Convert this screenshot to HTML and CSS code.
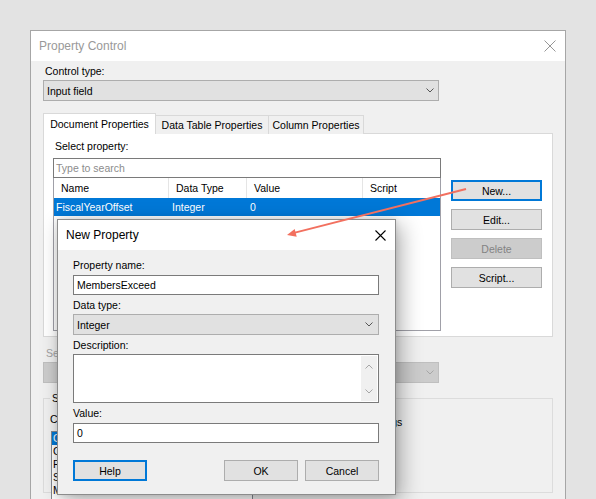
FILE: index.html
```html
<!DOCTYPE html>
<html lang="en">
<head>
    <meta charset="UTF-8">
    <title>Property Control</title>
    <link rel="stylesheet" href="styles.css">
</head>
<body>
    <div class="window">
        <div class="titlebar">
            <span class="title">Property Control</span>
            <svg class="close-x dim" width="12" height="12" viewBox="0 0 12 12"><path d="M0.5 0.5 L11.5 11.5 M11.5 0.5 L0.5 11.5" /></svg>
        </div>
        <div class="content">
            <div class="label first">Control type:</div>
            <div class="combo">
                <span>Input field</span>
                <svg class="chev" width="8" height="5" viewBox="0 0 8 5"><polyline points="0.5,0.5 4,4 7.5,0.5" /></svg>
            </div>

            <div class="tabs">
                <div class="tab active" style="width:113px">Document Properties</div>
                <div class="tab" style="width:113px">Data Table Properties</div>
                <div class="tab" style="width:95px">Column Properties</div>
            </div>
            <div class="tab-panel">
                <div class="prop-left">
                    <div class="label">Select property:</div>
                    <div class="search">Type to search</div>
                    <div class="list">
                        <div class="list-head">
                            <div>Name</div>
                            <div>Data Type</div>
                            <div>Value</div>
                            <div>Script</div>
                        </div>
                        <div class="list-row selected">
                            <div>FiscalYearOffset</div>
                            <div>Integer</div>
                            <div>0</div>
                            <div></div>
                        </div>
                    </div>
                </div>
                <div class="prop-buttons">
                    <div class="btn default">New...</div>
                    <div class="btn">Edit...</div>
                    <div class="btn disabled">Delete</div>
                    <div class="btn">Script...</div>
                </div>
            </div>

            <div class="label dim-label">Set by:</div>
            <div class="combo disabled">
                <span></span>
                <svg class="chev light" width="8" height="5" viewBox="0 0 8 5"><polyline points="0.5,0.5 4,4 7.5,0.5" /></svg>
            </div>

            <fieldset class="group">
                <legend>Settings</legend>
                <div class="group-row">
                    <div class="group-left">
                        <div class="label flat">Columns:</div>
                        <div class="listbox">
                            <div class="item selected">Col 1</div>
                            <div class="item">Col 2</div>
                            <div class="item">Fiscal</div>
                            <div class="item">Sales</div>
                            <div class="item">Members</div>
                        </div>
                    </div>
                    <div class="group-right">Format settings</div>
                </div>
            </fieldset>
        </div>
    </div>

    <div class="dialog">
        <div class="dialog-title">
            <span>New Property</span>
            <svg class="close-x" width="11" height="11" viewBox="0 0 11 11"><path d="M0.5 0.5 L10.5 10.5 M10.5 0.5 L0.5 10.5" /></svg>
        </div>
        <div class="dialog-body">
            <div class="label">Property name:</div>
            <div class="field">MembersExceed</div>
            <div class="label">Data type:</div>
            <div class="combo wide">
                <span>Integer</span>
                <svg class="chev" width="8" height="5" viewBox="0 0 8 5"><polyline points="0.5,0.5 4,4 7.5,0.5" /></svg>
            </div>
            <div class="label">Description:</div>
            <div class="textarea">
                <div class="vscroll">
                    <svg class="chev light" width="8" height="5" viewBox="0 0 8 5"><polyline points="0.5,4.5 4,1 7.5,4.5" /></svg>
                    <svg class="chev light" width="8" height="5" viewBox="0 0 8 5"><polyline points="0.5,0.5 4,4 7.5,0.5" /></svg>
                </div>
            </div>
            <div class="label">Value:</div>
            <div class="field">0</div>
            <div class="dialog-buttons">
                <div class="btn default">Help</div>
                <div class="btn push">OK</div>
                <div class="btn">Cancel</div>
            </div>
        </div>
    </div>

    <svg class="arrow" width="596" height="499" viewBox="0 0 596 499">
        <line x1="466" y1="189" x2="295" y2="232.6" />
        <polygon points="287,235 296.7,236.7 294.7,228.9" />
    </svg>
</body>
</html>
```

FILE: styles.css
```css
body {
    margin: 0;
    height: 499px;
    overflow: hidden;
    position: relative;
    background-color: #e3e3e3;
    font-family: "Liberation Sans", Arial, sans-serif;
    font-size: 10.5px;
    color: #000;
}
.window {
    margin: 30px 0 0 30px;
    width: 536px;
    height: 469px;
    box-sizing: border-box;
    border: 1px solid #a6a6a6;
    border-bottom: none;
    background-color: #f0f0f0;
}
.titlebar {
    height: 30px;
    background-color: #fff;
    display: flex;
    align-items: center;
    justify-content: space-between;
    padding: 0 9px 0 8px;
}
.title {
    font-size: 12px;
    color: #999;
}
.close-x {
    stroke: #000;
    stroke-width: 1.1;
    fill: none;
}
.close-x.dim {
    stroke: #8a8a8a;
    stroke-width: 0.9;
}
.content {
    padding: 0 12px;
}
.label {
    line-height: 14px;
    padding-left: 2px;
    white-space: nowrap;
}
.label.first {
    margin-top: 3px;
}
.combo {
    width: 396px;
    height: 21px;
    box-sizing: border-box;
    margin-top: 2px;
    border: 1px solid #adadad;
    background-color: #e1e1e1;
    display: flex;
    align-items: center;
    justify-content: space-between;
    padding: 0 4px 0 3px;
}
.combo.disabled {
    background-color: #cccccc;
    border-color: #bfbfbf;
}
.chev {
    fill: none;
    stroke: #555;
    stroke-width: 1;
}
.chev.light {
    stroke: #a6a6a6;
}

/* tabs */
.tabs {
    display: flex;
    align-items: flex-end;
    height: 21px;
    margin-top: 12px;
}
.tab {
    height: 19px;
    box-sizing: border-box;
    border: 1px solid #d9d9d9;
    border-left: none;
    border-bottom: none;
    background-color: #f0f0f0;
    text-align: center;
    line-height: 18px;
    white-space: nowrap;
}
.tab.active {
    height: 21px;
    border-left: 1px solid #d9d9d9;
    background-color: #fff;
    line-height: 20px;
    position: relative;
    z-index: 1;
}
.tab-panel {
    margin-top: -1px;
    height: 204px;
    box-sizing: border-box;
    border: 1px solid #d9d9d9;
    background-color: #fff;
    display: flex;
    padding: 5px 0 0 9px;
}
.prop-left {
    width: 388px;
}
.search {
    margin-top: 5px;
    height: 20px;
    box-sizing: border-box;
    border: 1px solid #7a7a7a;
    color: #8c8c8c;
    line-height: 18px;
    padding-left: 2px;
}
.list {
    height: 153px;
    box-sizing: border-box;
    border: 1px solid #a0a0a8;
    border-top: none;
}
.list-head,
.list-row {
    display: grid;
    grid-template-columns: 114px 78px 116px 1fr;
}
.list-head {
    height: 20px;
    line-height: 20px;
}
.list-head div {
    padding-left: 7px;
}
.list-head div + div {
    border-left: 1px solid #e5e5e5;
}
.list-row {
    height: 18px;
    line-height: 18px;
}
.list-row div {
    padding-left: 4px;
}
.list-row div:first-child {
    padding-left: 2px;
}
.list-row.selected {
    background-color: #0078d7;
    color: #fff;
}
.prop-buttons {
    width: 91px;
    margin-left: 10px;
    padding-top: 41px;
    display: flex;
    flex-direction: column;
    gap: 8px;
}
.btn {
    height: 21px;
    box-sizing: border-box;
    border: 1px solid #adadad;
    background-color: #e1e1e1;
    display: flex;
    align-items: center;
    justify-content: center;
}
.btn.default {
    border: 2px solid #0078d7;
}
.btn.disabled {
    background-color: #cccccc;
    border-color: #bfbfbf;
    color: #838383;
}

/* area under the tabs */
.dim-label {
    color: #a0a0a0;
    margin-top: 9px;
    padding-left: 3px;
}
.group {
    margin: 8px 0 0 0;
    padding: 0 6px;
    height: 100px;
    border: 1px solid #dcdcdc;
    min-inline-size: 0;
}
.group legend {
    padding: 0 2px;
    line-height: 14px;
}
.group-row {
    display: flex;
}
.group-left {
    width: 280px;
}
.label.flat {
    padding-left: 0;
    margin-top: 7px;
}
.listbox {
    margin: 5px 0 0 1px;
    width: 200px;
    height: 80px;
    border: 1px solid #828790;
    background-color: #fff;
}
.item {
    line-height: 13px;
    padding-left: 1px;
}
.item.selected {
    background-color: #0078d7;
    color: #fff;
}
.group-right {
    margin-top: 10px;
    line-height: 14px;
}

/* New Property dialog */
.dialog {
    position: absolute;
    left: 57px;
    top: 219px;
    width: 339px;
    height: 276px;
    box-sizing: border-box;
    border: 1px solid #8c8c8c;
    background-color: #f0f0f0;
    box-shadow: 5px 6px 20px rgba(0, 0, 0, 0.32), 0 0 6px rgba(0, 0, 0, 0.12);
}
.dialog-title {
    height: 30px;
    background-color: #fff;
    display: flex;
    align-items: center;
    justify-content: space-between;
    padding: 0 9px 0 8px;
    font-size: 12px;
}
.dialog-body {
    padding: 8px 16px 0 15px;
}
.dialog-body .label {
    padding-left: 0;
    margin-top: 3px;
}
.dialog-body .label:first-child {
    margin-top: 0;
}
.field {
    margin-top: 3px;
    height: 20px;
    box-sizing: border-box;
    border: 1px solid #7a7a7a;
    background-color: #fff;
    line-height: 18px;
    padding-left: 3px;
}
.combo.wide {
    width: 100%;
    padding: 0 5px 0 3px;
}
.textarea {
    margin-top: 2px;
    height: 49px;
    box-sizing: border-box;
    border: 1px solid #7a7a7a;
    background-color: #fff;
    display: flex;
    justify-content: flex-end;
    padding: 1px;
}
.vscroll {
    width: 16px;
    background-color: #f0f0f0;
    display: flex;
    flex-direction: column;
    align-items: center;
    justify-content: space-between;
    padding: 8px 0 7px;
    box-sizing: border-box;
}
.dialog-body .label + .field:last-of-type {
    margin-top: 2px;
}
.dialog-buttons {
    margin-top: 17px;
    display: flex;
    gap: 7px;
}
.dialog-buttons .btn {
    width: 74px;
}
.btn.push {
    margin-left: auto;
}

.arrow {
    position: absolute;
    left: 0;
    top: 0;
    pointer-events: none;
}
.arrow line {
    stroke: #f2705f;
    stroke-width: 2;
}
.arrow polygon {
    fill: #f2705f;
}
```
